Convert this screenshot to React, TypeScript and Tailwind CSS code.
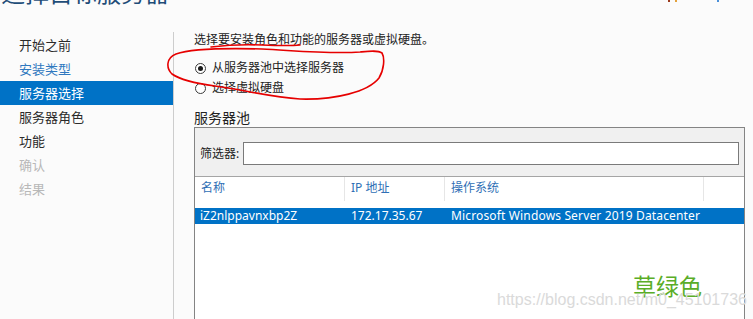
const sidebarItems = [
  { label: '开始之前', tone: 'text-[#2b2b2b]' },
  { label: '安装类型', tone: 'text-[#2f78bf]' },
  { label: '服务器选择', tone: 'text-white bg-[#0072c6]' },
  { label: '服务器角色', tone: 'text-[#2b2b2b]' },
  { label: '功能', tone: 'text-[#2b2b2b]' },
  { label: '确认', tone: 'text-[#b8b8b8]' },
  { label: '结果', tone: 'text-[#b8b8b8]' }
]

const Radio = ({ checked }: { checked?: boolean }) => (
  <span className="flex items-center justify-center w-[11px] h-[11px] rounded-full border border-[#3a3a3a] bg-white">
    {checked && <span className="w-[5px] h-[5px] rounded-full bg-[#1a1a1a]" />}
  </span>
)

export default function App() {
  return (
    <div
      className="relative w-[753px] h-[319px] overflow-hidden bg-[#fbfbfb] text-[#222]"
      style={{ fontFamily: '"Noto Sans", "Noto Sans CJK SC", sans-serif' }}
    >
      {/* title, cut off by the screenshot */}
      <div className="flex h-[8px] overflow-hidden">
        <div className="-mt-[19px] pl-[1px] text-[24px] leading-[24px] text-[#1f4d78] whitespace-nowrap">选择目标服务器</div>
        <div className="flex ml-auto mr-[34px] gap-[5px] h-[2px]">
          <span className="w-[2px] bg-[#9b3b1e]" />
          <span className="w-[2px] bg-[#e3a13c]" />
          <span className="w-[30px]" />
          <span className="w-[2px] bg-[#4a90d9]" />
        </div>
      </div>

      <div className="flex mt-[24px] h-[287px]">
        <div className="w-[174px] pt-[1px] border-r border-[#cdcdcd]">
          {sidebarItems.map(item => (
            <div key={item.label} className={`h-[24px] w-[173px] pl-[19px] text-[13px] leading-[24px] ${item.tone}`}>
              {item.label}
            </div>
          ))}
        </div>

        <div className="flex-1 pl-[20px]">
          <p className="text-[12px] leading-[16px] text-[#222]">选择要安装角色和功能的服务器或虚拟硬盘。</p>

          <div className="mt-[10px]">
            <label className="flex items-center h-[20px] gap-[6px] pl-[1px] text-[12px]">
              <Radio checked />
              从服务器池中选择服务器
            </label>
            <label className="flex items-center h-[20px] gap-[6px] pl-[1px] text-[12px]">
              <Radio />
              选择虚拟硬盘
            </label>
          </div>

          <h3 className="mt-[11px] text-[14px] leading-[18px] text-[#222]">服务器池</h3>

          <div className="w-[551px] h-[200px] border border-[#848484] bg-white">
            <div className="flex items-start gap-[4px] pt-[14px] pb-[11px] px-[5px] bg-[#f0f0f0] border-b border-[#a5a5a5]">
              <span className="text-[12px] leading-[23px]">筛选器:</span>
              <div className="flex-1 h-[23px] border border-[#7a7a7a] bg-white" />
            </div>

            <div className="flex h-[24px] text-[12px] leading-[22px] text-[#2f6fb5]">
              <div className="w-[150px] pl-[6px] border-r border-[#e6e6e6]">名称</div>
              <div className="w-[100px] pl-[6px] border-r border-[#e6e6e6]">IP 地址</div>
              <div className="w-[259px] pl-[6px] border-r border-[#e6e6e6]">操作系统</div>
              <div className="flex-1" />
            </div>

            <div className="flex mt-[7px] h-[16px] bg-[#0072c6] text-white text-[12px] leading-[16px] whitespace-nowrap">
              <div className="w-[150px] pl-[5px]">iZ2nlppavnxbp2Z</div>
              <div className="w-[100px] pl-[6px]">172.17.35.67</div>
              <div className="flex-1 pl-[6px] tracking-[0.15px]">Microsoft Windows Server 2019 Datacenter</div>
            </div>
          </div>
        </div>
      </div>

      {/* hand-drawn annotation */}
      <svg className="absolute inset-0 pointer-events-none" width="753" height="319" viewBox="0 0 753 319" fill="none">
        <path d="M211 47 Q 235 44 262 45 T 300 45" stroke="#e60000" strokeWidth="1.6" strokeLinecap="round" />
        <path
          d="M262 49 C 225 48 190 49 176 54 C 166 58 166 68 172 74 C 182 81 200 84 215 86 C 245 90 270 97 300 99 C 335 100 368 92 379 78 C 384 70 385 58 382 53 C 378 50 370 51 360 52 C 330 54 300 51 262 49"
          stroke="#e60000"
          strokeWidth="1.6"
          strokeLinecap="round"
          strokeLinejoin="round"
        />
      </svg>

      {/* watermarks */}
      <div className="absolute left-[633px] top-[271px] text-[23px] leading-[28px] text-[#5aad27]" style={{ fontFamily: '"Noto Sans CJK SC", sans-serif' }}>
        草绿色
      </div>
      <div className="absolute left-[497px] top-[291px] text-[16px] leading-[18px] text-[#dadada]" style={{ fontFamily: '"Liberation Sans", Arial, sans-serif' }}>
        https://blog.csdn.net/m0_45101736
      </div>
    </div>
  )
}
